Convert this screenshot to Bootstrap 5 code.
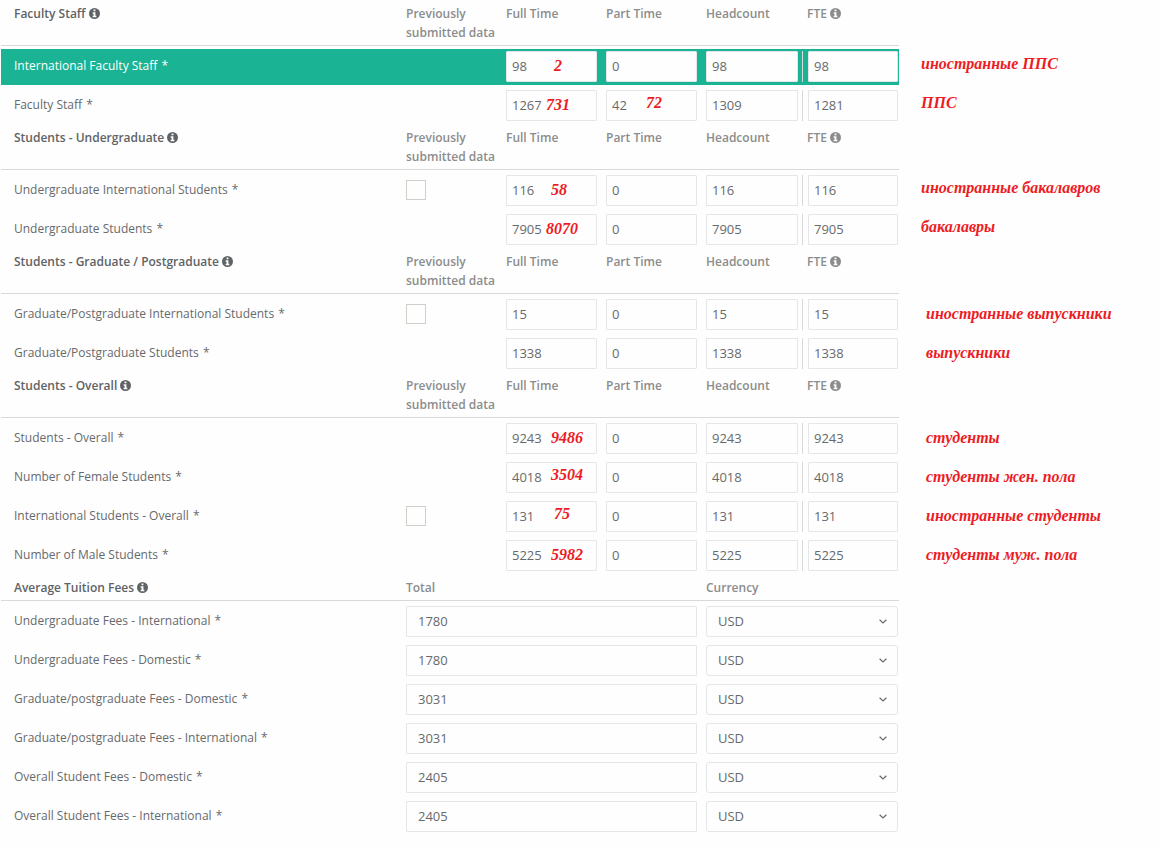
<!DOCTYPE html>
<html lang="en">
<head>
<meta charset="utf-8">
<meta name="viewport" content="width=device-width, initial-scale=1">
<title>Faculty, students and tuition fees</title>
<link href="https://cdn.jsdelivr.net/npm/bootstrap@5.3.0/dist/css/bootstrap.min.css" rel="stylesheet">
<style>
  body { font-family: "Open Sans", sans-serif; font-size: 12px; line-height: 19px; color: #676a6c; background: #fefefe; }
  .survey { padding-top: 1px; }
  .group { padding-bottom: 1px; }

  /* data columns on the left, reviewer remarks on the right */
  .line { display: grid; grid-template-columns: minmax(0, 899fr) minmax(0, 260fr); }
  .fields { display: grid; grid-template-columns: minmax(0, 405fr) minmax(0, 100fr) minmax(0, 100fr) minmax(0, 100fr) minmax(0, 96fr) minmax(0, 97fr); align-items: center; margin-left: 1px; }
  .fields.fees { grid-template-columns: minmax(0, 405fr) minmax(0, 300fr) minmax(0, 193fr); }
  .fields > :first-child { padding-left: 13px; }

  .titles { align-items: start; padding: 3px 0; border-bottom: 1px solid #d9d9d9; font-weight: 600; color: #8c8c8c; }
  .titles h2 { font-size: 12px; line-height: 19px; font-weight: 600; color: #606365; margin: 0; }
  .titles .fte { padding-left: 5px; }
  .info { width: 11px; height: 11px; fill: currentColor; vertical-align: -1px; }

  .entry { margin-top: 3px; padding: 2px 0 3px; }
  .entry > label, .entry .prev { padding-bottom: 2px; }
  .entry.active { background: #1ab394; color: #fff; }
  .star { padding-left: 1px; }
  .cell { position: relative; padding-right: 9px; }
  .cell.head { padding-right: 4px; }
  .cell.fte { border-left: 1px solid #d9d9d9; padding: 0 1px 0 5px; }
  .cell.currency { padding-right: 1px; }

  .box { height: 31px; padding: 0 5px 1px; border: 1px solid #e5e6e7; border-radius: 1px; font-size: 13px; line-height: 19px; color: #676a6c; background-color: #fefefe; }
  .fees .box { padding-left: 11px; }
  select.box { border-radius: 3px; background-position: right 10px center; background-size: 8px 5px;
    background-image: url("data:image/svg+xml,%3Csvg xmlns='http://www.w3.org/2000/svg' viewBox='0 0 8 5'%3E%3Cpath d='M.6.7 4 4 7.4.7' fill='none' stroke='%23676a6c' stroke-width='1.2'/%3E%3C/svg%3E"); }
  .form-check-input.tick[type=checkbox] { width: 20px; height: 20px; margin: 0; border: 1px solid #d2cfc8; border-radius: 0; background-color: #fefefe; display: block; }

  .pen { font-family: "Liberation Serif", serif; font-style: italic; font-weight: 700; font-size: 16px; line-height: 19px; color: #ed1c24; }
  .remark { align-self: center; padding-left: 27px; white-space: nowrap; }
  .early .remark { padding: 0 0 5px 22px; }
  .fix { position: absolute; top: 5px; left: 45px; }
  .fix.near { left: 40px; }
  .fix.far { left: 48px; }
  .fix.high { top: 3px; }
</style>
</head>
<body>
<svg class="d-none" aria-hidden="true"><symbol id="info" viewBox="0 0 12 12"><path fill-rule="evenodd" d="M6 0a6 6 0 1 0 0 12A6 6 0 0 0 6 0ZM5 1.500h2v2H5ZM4 4.600H7v3.900h1V10.200H4V8.500H5V6.200H4Z"/></symbol></svg>
<form class="survey">

  <section class="group early">
    <div class="line"><div class="fields titles">
      <h2>Faculty Staff <svg class="info"><use href="#info"/></svg></h2><div>Previously<br>submitted data</div><div>Full Time</div><div>Part Time</div><div>Headcount</div><div class="fte">FTE <svg class="info"><use href="#info"/></svg></div>
    </div></div>
    <div class="line">
      <div class="fields entry active">
        <label for="a1">International Faculty Staff <span class="star">*</span></label><div class="prev"></div>
        <div class="cell"><input id="a1" class="form-control box" value="98"><span class="pen fix far">2</span></div>
        <div class="cell"><input aria-label="Part Time" class="form-control box" value="0"></div>
        <div class="cell head"><input aria-label="Headcount" class="form-control box" value="98"></div>
        <div class="cell fte"><input aria-label="FTE" class="form-control box" value="98"></div>
      </div>
      <div class="pen remark" lang="ru">иностранные ППС</div>
    </div>
    <div class="line">
      <div class="fields entry">
        <label for="a2">Faculty Staff <span class="star">*</span></label><div class="prev"></div>
        <div class="cell"><input id="a2" class="form-control box" value="1267"><span class="pen fix near">731</span></div>
        <div class="cell"><input aria-label="Part Time" class="form-control box" value="42"><span class="pen fix near high">72</span></div>
        <div class="cell head"><input aria-label="Headcount" class="form-control box" value="1309"></div>
        <div class="cell fte"><input aria-label="FTE" class="form-control box" value="1281"></div>
      </div>
      <div class="pen remark" lang="ru">ППС</div>
    </div>
  </section>

  <section class="group early">
    <div class="line"><div class="fields titles">
      <h2>Students - Undergraduate <svg class="info"><use href="#info"/></svg></h2><div>Previously<br>submitted data</div><div>Full Time</div><div>Part Time</div><div>Headcount</div><div class="fte">FTE <svg class="info"><use href="#info"/></svg></div>
    </div></div>
    <div class="line">
      <div class="fields entry">
        <label for="b1">Undergraduate International Students <span class="star">*</span></label><div class="prev"><input type="checkbox" class="form-check-input tick" aria-label="Previously submitted data"></div>
        <div class="cell"><input id="b1" class="form-control box" value="116"><span class="pen fix">58</span></div>
        <div class="cell"><input aria-label="Part Time" class="form-control box" value="0"></div>
        <div class="cell head"><input aria-label="Headcount" class="form-control box" value="116"></div>
        <div class="cell fte"><input aria-label="FTE" class="form-control box" value="116"></div>
      </div>
      <div class="pen remark" lang="ru">иностранные бакалавров</div>
    </div>
    <div class="line">
      <div class="fields entry">
        <label for="b2">Undergraduate Students <span class="star">*</span></label><div class="prev"></div>
        <div class="cell"><input id="b2" class="form-control box" value="7905"><span class="pen fix near">8070</span></div>
        <div class="cell"><input aria-label="Part Time" class="form-control box" value="0"></div>
        <div class="cell head"><input aria-label="Headcount" class="form-control box" value="7905"></div>
        <div class="cell fte"><input aria-label="FTE" class="form-control box" value="7905"></div>
      </div>
      <div class="pen remark" lang="ru">бакалавры</div>
    </div>
  </section>

  <section class="group">
    <div class="line"><div class="fields titles">
      <h2>Students - Graduate / Postgraduate <svg class="info"><use href="#info"/></svg></h2><div>Previously<br>submitted data</div><div>Full Time</div><div>Part Time</div><div>Headcount</div><div class="fte">FTE <svg class="info"><use href="#info"/></svg></div>
    </div></div>
    <div class="line">
      <div class="fields entry">
        <label for="c1">Graduate/Postgraduate International Students <span class="star">*</span></label><div class="prev"><input type="checkbox" class="form-check-input tick" aria-label="Previously submitted data"></div>
        <div class="cell"><input id="c1" class="form-control box" value="15"></div>
        <div class="cell"><input aria-label="Part Time" class="form-control box" value="0"></div>
        <div class="cell head"><input aria-label="Headcount" class="form-control box" value="15"></div>
        <div class="cell fte"><input aria-label="FTE" class="form-control box" value="15"></div>
      </div>
      <div class="pen remark" lang="ru">иностранные выпускники</div>
    </div>
    <div class="line">
      <div class="fields entry">
        <label for="c2">Graduate/Postgraduate Students <span class="star">*</span></label><div class="prev"></div>
        <div class="cell"><input id="c2" class="form-control box" value="1338"></div>
        <div class="cell"><input aria-label="Part Time" class="form-control box" value="0"></div>
        <div class="cell head"><input aria-label="Headcount" class="form-control box" value="1338"></div>
        <div class="cell fte"><input aria-label="FTE" class="form-control box" value="1338"></div>
      </div>
      <div class="pen remark" lang="ru">выпускники</div>
    </div>
  </section>

  <section class="group">
    <div class="line"><div class="fields titles">
      <h2>Students - Overall <svg class="info"><use href="#info"/></svg></h2><div>Previously<br>submitted data</div><div>Full Time</div><div>Part Time</div><div>Headcount</div><div class="fte">FTE <svg class="info"><use href="#info"/></svg></div>
    </div></div>
    <div class="line">
      <div class="fields entry">
        <label for="d1">Students - Overall <span class="star">*</span></label><div class="prev"></div>
        <div class="cell"><input id="d1" class="form-control box" value="9243"><span class="pen fix">9486</span></div>
        <div class="cell"><input aria-label="Part Time" class="form-control box" value="0"></div>
        <div class="cell head"><input aria-label="Headcount" class="form-control box" value="9243"></div>
        <div class="cell fte"><input aria-label="FTE" class="form-control box" value="9243"></div>
      </div>
      <div class="pen remark" lang="ru">студенты</div>
    </div>
    <div class="line">
      <div class="fields entry">
        <label for="d2">Number of Female Students <span class="star">*</span></label><div class="prev"></div>
        <div class="cell"><input id="d2" class="form-control box" value="4018"><span class="pen fix high">3504</span></div>
        <div class="cell"><input aria-label="Part Time" class="form-control box" value="0"></div>
        <div class="cell head"><input aria-label="Headcount" class="form-control box" value="4018"></div>
        <div class="cell fte"><input aria-label="FTE" class="form-control box" value="4018"></div>
      </div>
      <div class="pen remark" lang="ru">студенты жен. пола</div>
    </div>
    <div class="line">
      <div class="fields entry">
        <label for="d3">International Students - Overall <span class="star">*</span></label><div class="prev"><input type="checkbox" class="form-check-input tick" aria-label="Previously submitted data"></div>
        <div class="cell"><input id="d3" class="form-control box" value="131"><span class="pen fix far high">75</span></div>
        <div class="cell"><input aria-label="Part Time" class="form-control box" value="0"></div>
        <div class="cell head"><input aria-label="Headcount" class="form-control box" value="131"></div>
        <div class="cell fte"><input aria-label="FTE" class="form-control box" value="131"></div>
      </div>
      <div class="pen remark" lang="ru">иностранные студенты</div>
    </div>
    <div class="line">
      <div class="fields entry">
        <label for="d4">Number of Male Students <span class="star">*</span></label><div class="prev"></div>
        <div class="cell"><input id="d4" class="form-control box" value="5225"><span class="pen fix">5982</span></div>
        <div class="cell"><input aria-label="Part Time" class="form-control box" value="0"></div>
        <div class="cell head"><input aria-label="Headcount" class="form-control box" value="5225"></div>
        <div class="cell fte"><input aria-label="FTE" class="form-control box" value="5225"></div>
      </div>
      <div class="pen remark" lang="ru">студенты муж. пола</div>
    </div>
  </section>

  <section class="group">
    <div class="line"><div class="fields fees titles">
      <h2>Average Tuition Fees <svg class="info"><use href="#info"/></svg></h2><div>Total</div><div>Currency</div>
    </div></div>
    <div class="line"><div class="fields fees entry">
      <label for="e1">Undergraduate Fees - International <span class="star">*</span></label>
      <div class="cell"><input id="e1" class="form-control box" value="1780"></div>
      <div class="cell currency"><select aria-label="Currency" class="form-select box"><option>USD</option></select></div>
    </div></div>
    <div class="line"><div class="fields fees entry">
      <label for="e2">Undergraduate Fees - Domestic <span class="star">*</span></label>
      <div class="cell"><input id="e2" class="form-control box" value="1780"></div>
      <div class="cell currency"><select aria-label="Currency" class="form-select box"><option>USD</option></select></div>
    </div></div>
    <div class="line"><div class="fields fees entry">
      <label for="e3">Graduate/postgraduate Fees - Domestic <span class="star">*</span></label>
      <div class="cell"><input id="e3" class="form-control box" value="3031"></div>
      <div class="cell currency"><select aria-label="Currency" class="form-select box"><option>USD</option></select></div>
    </div></div>
    <div class="line"><div class="fields fees entry">
      <label for="e4">Graduate/postgraduate Fees - International <span class="star">*</span></label>
      <div class="cell"><input id="e4" class="form-control box" value="3031"></div>
      <div class="cell currency"><select aria-label="Currency" class="form-select box"><option>USD</option></select></div>
    </div></div>
    <div class="line"><div class="fields fees entry">
      <label for="e5">Overall Student Fees - Domestic <span class="star">*</span></label>
      <div class="cell"><input id="e5" class="form-control box" value="2405"></div>
      <div class="cell currency"><select aria-label="Currency" class="form-select box"><option>USD</option></select></div>
    </div></div>
    <div class="line"><div class="fields fees entry">
      <label for="e6">Overall Student Fees - International <span class="star">*</span></label>
      <div class="cell"><input id="e6" class="form-control box" value="2405"></div>
      <div class="cell currency"><select aria-label="Currency" class="form-select box"><option>USD</option></select></div>
    </div></div>
  </section>
</form>
<script src="https://cdn.jsdelivr.net/npm/bootstrap@5.3.0/dist/js/bootstrap.bundle.min.js"></script>
</body>
</html>
